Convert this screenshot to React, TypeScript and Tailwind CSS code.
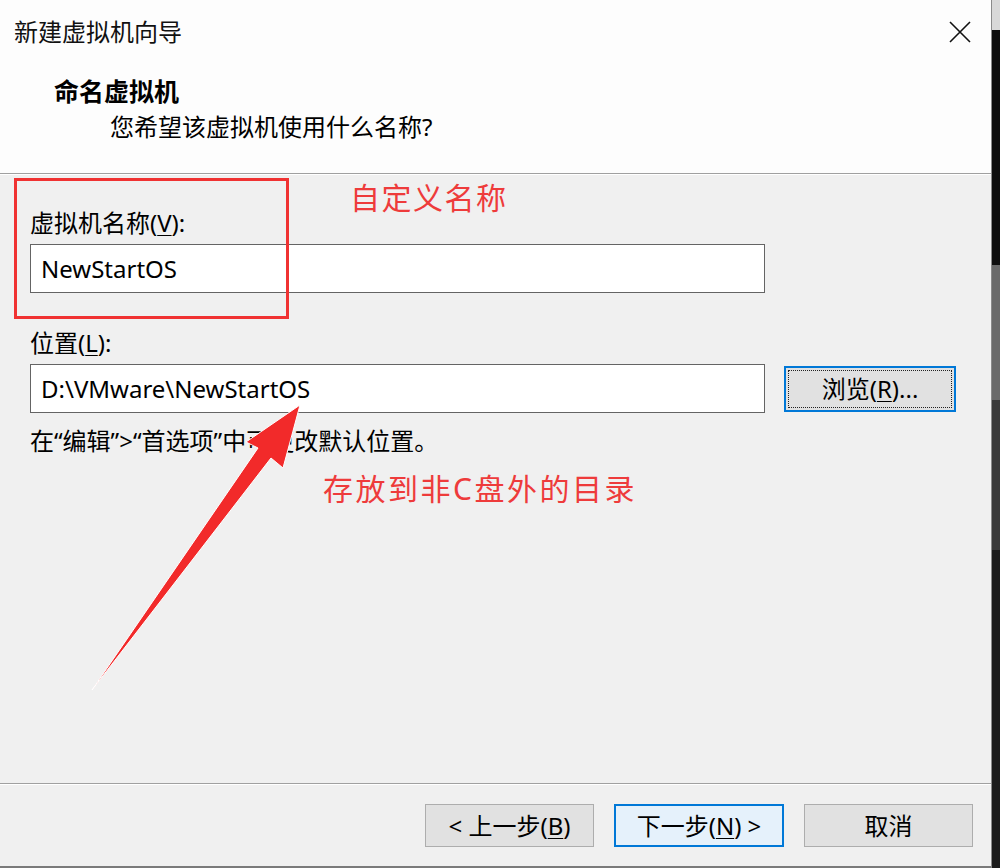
import React from 'react';

const ui = { fontFamily: '"Noto Sans", "Noto Sans CJK SC", sans-serif' };

function Key({ k }: { k: string }) {
  return <span className="underline underline-offset-[3px] decoration-1">{k}</span>;
}

function Button({ children, primary }: { children: React.ReactNode; primary?: boolean }) {
  return (
    <div
      className={
        primary
          ? 'flex h-[43px] w-[170px] items-center justify-center border-2 border-[#0078d7] bg-[#e5f1fb] text-[24px] text-black'
          : 'flex h-[43px] w-[169px] items-center justify-center border border-[#adadad] bg-[#e1e1e1] text-[24px] text-black'
      }
    >
      {children}
    </div>
  );
}

export default function App() {
  return (
    <div className="relative flex h-[868px] w-[1000px] overflow-hidden bg-[#141414]" style={ui}>
      {/* 对话框 */}
      <div className="flex h-[868px] w-[992px] flex-col border-r border-[#8a8a8a] bg-[#f0f0f0]">
        {/* 头部 */}
        <div className="h-[173px] bg-[#fdfdfd] pt-[16px]">
          <div className="flex items-center justify-between pl-[14px] pr-[20px]">
            <span className="text-[24px] leading-[32px] text-[#111]">新建虚拟机向导</span>
            <svg width="22" height="22" viewBox="0 0 22 22">
              <path d="M1 1 L21 21 M21 1 L1 21" stroke="#111" strokeWidth="1.6" />
            </svg>
          </div>
          <div className="mt-[28px] pl-[54px] text-[25px] font-bold leading-[30px] text-black">命名虚拟机</div>
          <div className="mt-[6px] pl-[110px] text-[24px] leading-[30px] text-black">您希望该虚拟机使用什么名称?</div>
        </div>
        <div className="h-[2px] border-t border-[#a0a0a0] bg-white" />

        {/* 内容 */}
        <div className="flex flex-1 flex-col px-[30px] pt-[34px] text-[24px] text-black">
          <div className="leading-[28px]">
            虚拟机名称(<Key k="V" />):
          </div>
          <div className="mt-[7px] flex h-[49px] w-[735px] items-center border border-[#646464] bg-white pl-[10px] leading-none">
            NewStartOS
          </div>
          <div className="mt-[36px] leading-[28px]">
            位置(<Key k="L" />):
          </div>
          <div className="mt-[7px] flex items-center gap-[19px]">
            <div className="flex h-[49px] w-[735px] items-center border border-[#646464] bg-white pl-[10px] leading-none">
              D:\VMware\NewStartOS
            </div>
            <div className="flex h-[46px] w-[172px] items-center justify-center border-2 border-[#0078d7] bg-[#e1e1e1] p-[2px]">
              <div className="flex h-full w-full items-center justify-center border border-dotted border-[#222]">
                浏览(<Key k="R" />)...
              </div>
            </div>
          </div>
          <div className="mt-[14px] leading-[28px]">在“编辑”&gt;“首选项”中可更改默认位置。</div>
        </div>

        {/* 底部 */}
        <div className="h-[2px] border-t border-[#a0a0a0] bg-white" />
        <div className="flex h-[81px] items-start justify-end gap-[20px] pr-[18px] pt-[19px]">
          <Button>
            &lt; 上一步(<Key k="B" />)
          </Button>
          <Button primary>
            下一步(<Key k="N" />) &gt;
          </Button>
          <Button>取消</Button>
        </div>
        <div className="h-[2px] bg-[#7a7a7a]" />
      </div>

      {/* 右侧背景 */}
      <div className="flex w-[8px] flex-col">
        <div className="h-[30px] bg-[#d8d8d8]" />
        <div className="h-[235px] bg-[#0e0e0e]" />
        <div className="h-[135px] bg-[#6a6a6a]" />
        <div className="h-[150px] bg-[#3a3a3a]" />
        <div className="flex-1 bg-[#1c1c1c]" />
      </div>

      {/* 标注 */}
      <div className="absolute left-[14px] top-[178px] h-[141px] w-[275px] border-[3px] border-[#f03232]" />
      <div className="absolute left-[350px] top-[178px] text-[30px] leading-[40px] tracking-[1.5px] text-[#ee3b3b]">
        自定义名称
      </div>
      <div className="absolute left-[323px] top-[469px] text-[30px] leading-[40px] tracking-[2.5px] text-[#ee3b3b]">
        存放到非C盘外的目录
      </div>
      <svg className="pointer-events-none absolute left-0 top-0" width="1000" height="868">
        <polygon
          points="300,405 283,468 271,458 92,690 258,448 246,442"
          fill="#f22a2a"
          stroke="#ffffff"
          strokeWidth="1"
          strokeLinejoin="round"
        />
      </svg>
    </div>
  );
}
